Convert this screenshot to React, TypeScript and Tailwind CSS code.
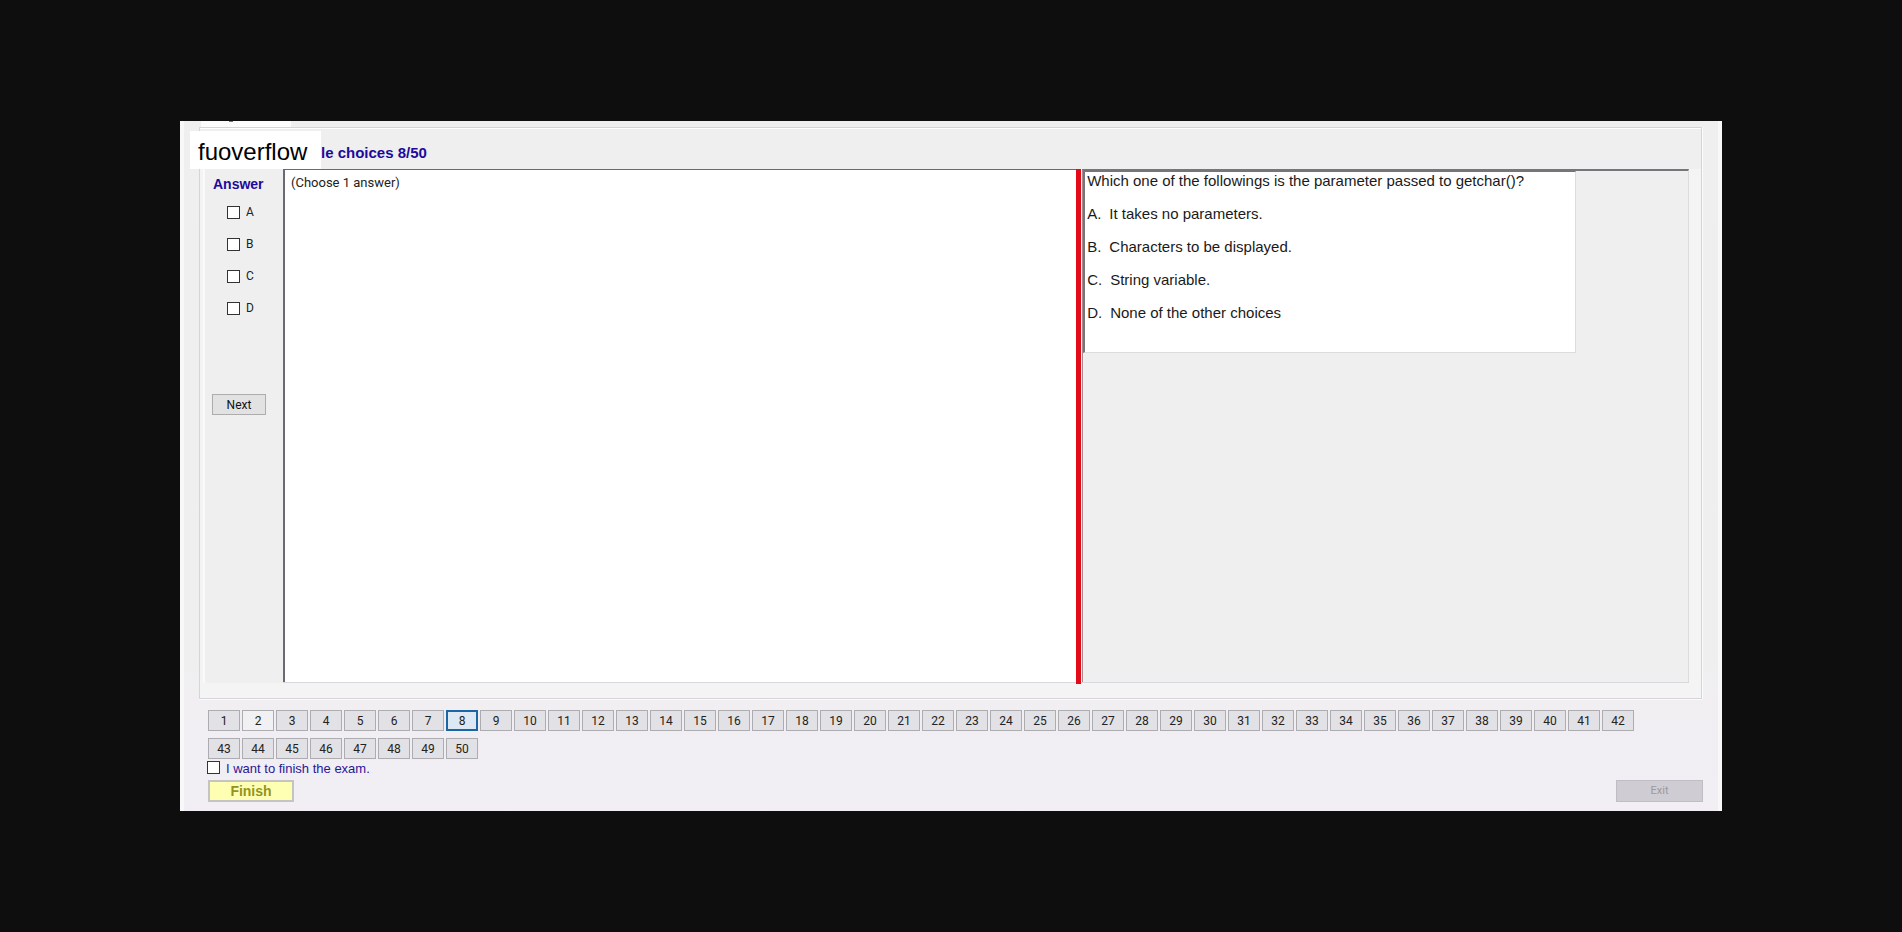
import { useState } from 'react';

const answers = ['A', 'B', 'C', 'D'];

const choices = [
  { key: 'A', text: 'It takes no parameters.' },
  { key: 'B', text: 'Characters to be displayed.' },
  { key: 'C', text: 'String variable.' },
  { key: 'D', text: 'None of the other choices' },
];

const questionNumbers = Array.from({ length: 50 }, (_, i) => i + 1);

const boxClass =
  'size-[13px] shrink-0 appearance-none border border-[#333333] bg-white checked:bg-[#1565a8]';

function Sidebar() {
  return (
    <aside className="flex w-[80px] shrink-0 flex-col border-l-2 border-[#fafafa] bg-[#efefef] pt-[5px]">
      <h2 className="pl-2 text-sm leading-5 font-bold text-[#1d0a9c]">Answer</h2>
      <div className="flex flex-col pt-0.5 pl-[22px]">
        {answers.map((letter) => (
          <label
            key={letter}
            className="flex h-8 items-center gap-1.5 font-[Roboto,sans-serif] text-xs text-[#222222]"
          >
            <input type="checkbox" name="answer" value={letter} className={boxClass} />
            {letter}
          </label>
        ))}
      </div>
      <button
        type="button"
        className="mt-[70px] ml-[7px] h-[21px] w-[54px] border border-[#adadad] bg-[#e2e2e2] font-[Roboto,sans-serif] text-xs text-[#111111]"
      >
        Next
      </button>
    </aside>
  );
}

function QuestionCard() {
  return (
    <article className="mr-[112px] min-h-[182px] border-t border-r border-b border-l-2 border-t-[#77757a] border-r-[#dcdcdc] border-b-[#dcdcdc] border-l-[#77757a] bg-white pl-0.5 text-[15px] leading-[18px] text-[#1a1a1a]">
      <p>Which one of the followings is the parameter passed to getchar()?</p>
      <ol className="flex flex-col gap-[15px] pt-[15px]">
        {choices.map((choice) => (
          <li key={choice.key} className="flex gap-2">
            <span>{choice.key}.</span>
            <span>{choice.text}</span>
          </li>
        ))}
      </ol>
    </article>
  );
}

export default function App() {
  const [current, setCurrent] = useState(8);

  return (
    <main className="flex min-h-screen flex-col justify-center bg-[#0e0e0e] px-[180px] font-['Liberation_Sans',Arial,sans-serif]">
      <div className="border-x-4 border-[#f8f8f8] bg-linear-to-b from-[#efefef] from-75% to-[#f2eef5] pr-4 pb-[9px] pl-[15px]">
        <div className="h-1.5">
          <div className="ml-0.5 h-full w-[90px] bg-[#fcfcfc] pl-7">
            <div className="h-px w-1 bg-[#77757a]" />
          </div>
        </div>

        <section className="border border-[#d5d5d9] bg-[#f4f4f5] pb-[15px] shadow-[inset_0_1px_0_#ffffff,1px_0_0_#fbfbfb,0_1px_0_#fbfbfb]">
          <header className="relative mt-px flex h-10 items-center bg-[#efefef] pt-2 pl-[121px]">
            <div className="absolute top-[2px] -left-2.5 flex h-[38px] w-[131px] items-center bg-white pt-1 pl-2 text-2xl text-black">
              fuoverflow
            </div>
            <h1 className="text-[15px] leading-5 font-bold text-[#1d0a9c]">le choices 8/50</h1>
          </header>

          <div className="flex min-h-[514px] pr-3 pl-[3px]">
            <Sidebar />
            <div className="grid flex-1 grid-cols-[792fr_612fr] border-b border-[#d9d9dd]">
              <div className="border-t border-l-2 border-[#696a75] bg-white px-1.5 pt-[3px] font-[Roboto,sans-serif] text-[13px] leading-5 text-[#222222]">
                (Choose 1 answer)
              </div>
              <div className="flex">
                <div className="-mb-[2px] w-[5px] shrink-0 bg-[#e30b17]" />
                <div className="ml-px flex-1 border-t-2 border-r border-l border-t-[#77757a] border-r-[#dcdcdc] border-l-[#a08d92] bg-[#efefef]">
                  <QuestionCard />
                </div>
              </div>
            </div>
          </div>
        </section>

        <nav aria-label="Questions" className="flex flex-wrap gap-x-0.5 gap-y-[7px] pt-[11px] pr-12 pl-[9px]">
          {questionNumbers.map((n) => (
            <button
              key={n}
              type="button"
              aria-current={n === current}
              onClick={() => setCurrent(n)}
              className={
                n === current
                  ? 'h-[21px] w-8 border-2 border-[#1c66a6] bg-[#dce8f3] font-[Roboto,sans-serif] text-xs leading-4 text-[#222222]'
                  : n === 2
                    ? 'h-[21px] w-8 border border-[#adadb1] bg-[#f1f0f2] font-[Roboto,sans-serif] text-xs leading-4 text-[#222222]'
                    : 'h-[21px] w-8 border border-[#adadb1] bg-[#e2e1e5] font-[Roboto,sans-serif] text-xs leading-4 text-[#222222]'
              }
            >
              {n}
            </button>
          ))}
        </nav>

        <label className="mt-0.5 ml-2 flex h-[19px] w-fit items-start gap-1.5 text-[13px] leading-4 text-[#2a1596]">
          <input type="checkbox" name="finish" className={boxClass} />
          I want to finish the exam.
        </label>
        <footer className="flex items-center justify-between pl-[9px]">
          <button
            type="button"
            className="h-[22px] w-[86px] border-2 border-[#c4c4c4] bg-[#ffffb4] text-sm leading-4 font-bold text-[#94941c]"
          >
            Finish
          </button>
          <button
            type="button"
            disabled
            className="-mr-px h-[22px] w-[87px] border border-[#c0bdc4] bg-[#cfccd3] font-[Roboto,sans-serif] text-[11px] leading-4 text-[#9c99a1]"
          >
            Exit
          </button>
        </footer>
      </div>
    </main>
  );
}
